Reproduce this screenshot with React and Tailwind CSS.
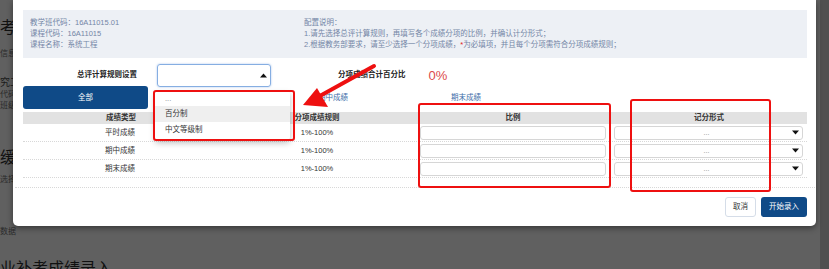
import React from "react";

const F = "font-['Liberation_Sans','Noto_Sans_CJK_SC',sans-serif]";

function Tri({ up }) {
  return (
    <svg width="7" height="5" viewBox="0 0 7 5" className="shrink-0">
      {up ? <polygon points="0,4.5 7,4.5 3.5,0.5" fill="#111" /> : <polygon points="0,0.5 7,0.5 3.5,4.5" fill="#111" />}
    </svg>
  );
}

function Row({ name }) {
  return (
    <div className="grid grid-cols-4 h-[18px] border-b border-dotted border-[#d8d8d8] items-center text-[7.5px] text-[#333]">
      <div className="text-center pr-[2px]">{name}</div>
      <div className="text-center">1%-100%</div>
      <div className="px-[5px] flex items-center">
        <div className="w-full h-[14px] border border-[#d6d6d6] rounded-[3px] bg-white" />
      </div>
      <div className="pl-[3px] pr-[4px] flex items-center">
        <div className="w-full h-[14px] border border-[#d6d6d6] rounded-[3px] bg-white flex items-center pr-[3px]">
          <div className="flex-1 text-center text-[#888] text-[7px] leading-none pl-[6px]">...</div>
          <Tri />
        </div>
      </div>
    </div>
  );
}

export default function App() {
  return (
    <div className={`relative w-[829px] h-[269px] overflow-hidden bg-[#606060] flex ${F}`}>
      {/* background page */}
      <div className="flex-1 flex flex-col items-start">
        <div className="h-[5px] w-[11px] bg-[#1b2d4d]" />
        <div className="mt-[19px] text-[16px] leading-[18px] text-[#111]">考试</div>
        <div className="mt-[12px] text-[8px] leading-[10px] text-[#2a2a2a]">信息</div>
        <div className="mt-[18px] text-[10px] leading-[12px] text-[#1a1a1a]">究工</div>
        <div className="text-[8px] leading-[11px] text-[#2a2a2a]">代码</div>
        <div className="text-[8px] leading-[11px] text-[#2a2a2a]">班级</div>
        <div className="mt-[38px] text-[16px] leading-[18px] text-[#111]">缓考</div>
        <div className="mt-[8px] text-[8px] leading-[10px] text-[#2a2a2a]">选择</div>
        <div className="mt-[42px] text-[8px] leading-[10px] text-[#2a2a2a]">数据</div>
        <div className="mt-[23px] text-[16px] leading-[18px] text-[#111] whitespace-nowrap">业补考成绩录入</div>
      </div>
      <div className="w-[9px] bg-[#505050]" />

      {/* modal */}
      <div className="absolute left-[13px] top-0 w-[803px] h-[226px] bg-white rounded-b-[5px] shadow-[0_2px_6px_rgba(0,0,0,0.45)] pl-[10px] pr-[9px] pt-[10px] flex flex-col">
        {/* info */}
        <div className="h-[48px] bg-[#edf0f5] flex px-[7px] pt-[7px] text-[7.5px] leading-[11px] text-[#7486a6]">
          <div className="w-[274px]">
            <div>教学班代码：16A11015.01</div>
            <div>课程代码：16A11015</div>
            <div>课程名称：系统工程</div>
          </div>
          <div>
            <div>配置说明：</div>
            <div>1.请先选择总评计算规则，再填写各个成绩分项的比例，并确认计分形式；</div>
            <div>
              2.根据教务部要求，请至少选择一个分项成绩，<span className="text-[#e02020]">*</span>为必填项，并且每个分项需符合分项成绩规则；
            </div>
          </div>
        </div>

        {/* rule row */}
        <div className="mt-[6px] h-[22px] flex items-center">
          <div className="w-[114px] text-right text-[7.5px] font-bold text-[#222]">总评计算规则设置</div>
          <div className="ml-[20px] w-[114px] h-[23px] border border-[#86aee2] rounded-[3px] shadow-[0_0_2px_rgba(100,150,220,0.6)] flex items-center justify-end pr-[3px]">
            <Tri up />
          </div>
          <div className="ml-[67px] text-[7.5px] font-bold text-[#222]">分项成绩合计百分比</div>
          <div className="ml-[23px] text-[13px] leading-none text-[#dc4a4a]">0%</div>
        </div>

        {/* tabs */}
        <div className="h-[23px] flex items-center text-[7.5px]">
          <div className="w-[125px] h-[23px] bg-[#0f4a87] rounded-[3px] text-white flex items-center justify-center">全部</div>
          <div className="ml-[37px] flex gap-[103px] text-[#3c6ca8]">
            <span>平时成绩</span>
            <span>期中成绩</span>
            <span>期末成绩</span>
          </div>
        </div>

        {/* table */}
        <div className="mt-[3px] grid grid-cols-4 h-[12px] bg-[#e2e2e2] items-center text-[7.5px] font-bold text-[#333]">
          <div className="text-center">成绩类型</div>
          <div className="text-center">分项成绩规则</div>
          <div className="text-center">比例</div>
          <div className="text-center">记分形式</div>
        </div>
        <Row name="平时成绩" />
        <Row name="期中成绩" />
        <Row name="期末成绩" />

        <div className="mt-[9px] -ml-[8px] -mr-[8px] border-t border-dotted border-[#d8d8d8]" />

        {/* footer */}
        <div className="mt-[9px] flex justify-end gap-[5px] text-[7.5px]">
          <div className="w-[31px] h-[20px] border border-[#d5dde8] rounded-[3px] flex items-center justify-center text-[#333]">取消</div>
          <div className="w-[46px] h-[20px] bg-[#0f4a87] rounded-[3px] flex items-center justify-center text-white">开始录入</div>
        </div>
      </div>

      {/* dropdown */}
      <div className="absolute left-[155px] top-[91px] w-[135px] h-[49px] bg-white shadow-[0_3px_6px_rgba(0,0,0,0.25)] rounded-[3px] text-[7.5px] text-[#333]">
        <div className="h-[15px] pl-[10px] flex items-center text-[#888]">...</div>
        <div className="h-[16px] pl-[10px] flex items-center bg-[#efefef]">百分制</div>
        <div className="h-[16px] pl-[10px] flex items-center">中文等级制</div>
      </div>

      {/* red annotations */}
      <div className="absolute left-[153px] top-[90px] w-[142px] h-[51px] border-2 border-[#ee1010] rounded-[3px]" />
      <div className="absolute left-[418px] top-[103px] w-[193px] h-[85px] border-2 border-[#ee1010] rounded-[3px]" />
      <div className="absolute left-[630px] top-[99px] w-[141px] h-[93px] border-2 border-[#ee1010] rounded-[3px]" />
      <svg className="absolute left-0 top-0 pointer-events-none" width="829" height="269">
        <line x1="374" y1="66" x2="318" y2="97" stroke="#ee1010" strokeWidth="4" strokeLinecap="round" />
        <polygon points="303,105 317,88 328,107" fill="#ee1010" />
      </svg>
    </div>
  );
}
